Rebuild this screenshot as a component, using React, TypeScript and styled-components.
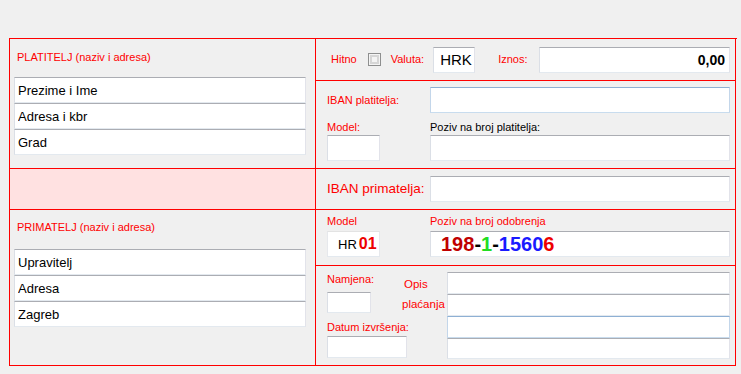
import React from 'react';
import styled, { createGlobalStyle } from 'styled-components';

const RED = '#ff0000';

const GlobalStyle = createGlobalStyle`
  html, body {
    margin: 0;
    padding: 0;
    background: #f0f0f0;
  }
  body {
    font-family: 'Liberation Sans', Arial, sans-serif;
    width: 741px;
    height: 374px;
    overflow: hidden;
  }
`;

const Page = styled.div`
  padding: 38px 0 0 9px;
`;

const Form = styled.div`
  display: grid;
  grid-template-columns: 306px 420px;
  grid-template-rows: 42px 88px 41px 56px 100px;
  width: 727px;
  border-top: 1px solid ${RED};
  border-left: 1px solid ${RED};
`;

const Cell = styled.div`
  box-sizing: border-box;
  min-width: 0;
  border-right: 1px solid ${RED};
  border-bottom: 1px solid ${RED};
`;

const PartyPanel = styled(Cell)<{ $row: string; $top: number; $gap: number }>`
  grid-column: 1;
  grid-row: ${p => p.$row};
  padding: ${p => p.$top}px 9px 0 4px;
  display: flex;
  flex-direction: column;

  & > h3 {
    margin: 0 0 ${p => p.$gap}px 3px;
  }
`;

const PinkStrip = styled(Cell)`
  grid-column: 1;
  grid-row: 3;
  background: #ffe1e1;
`;

const HeaderRow = styled(Cell)`
  grid-column: 2;
  grid-row: 1;
  display: flex;
  align-items: center;
  padding: 0 5px 0 15px;
`;

const PayerRow = styled(Cell)`
  grid-column: 2;
  grid-row: 2;
  padding: 6px 5px 0 10px;
`;

const PayeeIbanRow = styled(Cell)`
  grid-column: 2;
  grid-row: 3;
  display: flex;
  align-items: center;
  padding: 0 5px 0 11px;
`;

const ReferenceRow = styled(Cell)`
  grid-column: 2;
  grid-row: 4;
  padding: 5px 5px 0 10px;
`;

const PurposeRow = styled(Cell)`
  grid-column: 2;
  grid-row: 5;
  display: flex;
  padding: 0 5px 0 11px;
`;

const Heading = styled.h3`
  font-size: 11px;
  line-height: 13px;
  font-weight: normal;
  color: ${RED};
  white-space: nowrap;
`;

const Label = styled.span<{ $black?: boolean; $size?: number }>`
  display: block;
  font-size: ${p => p.$size || 11}px;
  line-height: 13px;
  color: ${p => (p.$black ? '#000000' : RED)};
  white-space: nowrap;
`;

const Field = styled.input<{ $focus?: boolean }>`
  box-sizing: border-box;
  margin: 0;
  padding: 0 0 0 3px;
  height: 26px;
  width: 100%;
  background: #ffffff;
  border: 1px solid;
  border-color: ${p =>
    p.$focus ? '#8eb0d4 #c3d6ea #c8dcee #c3d6ea' : '#abadb3 #e2e3ea #e3e9ef #dbdfe6'};
  font-family: 'Liberation Sans', Arial, sans-serif;
  font-size: 13px;
  color: #000000;
  outline: none;
`;

const AddressField = styled(Field)`
  height: 26px;
`;

const SmallField = styled(Field)<{ $w: number; $h: number }>`
  width: ${p => p.$w}px;
  height: ${p => p.$h}px;
  flex: none;
`;

const CurrencyField = styled(Field)`
  width: 42px;
  flex: none;
  margin-left: 9px;
  padding-left: 6px;
  font-size: 15px;
`;

const AmountField = styled(Field)`
  flex: 1;
  margin-left: 12px;
  padding-right: 4px;
  text-align: right;
  font-weight: bold;
  font-size: 14px;
`;

const CheckBox = styled.span`
  box-sizing: border-box;
  width: 13px;
  height: 13px;
  margin: 0 0 0 11px;
  border: 1px solid #8e8f8f;
  background: #f4f4f4;
  box-shadow: inset 0 0 0 1px #f4f4f4, inset 0 0 0 3px #d6d6d6;
  flex: none;
`;

const Line = styled.div<{ $mt?: number }>`
  display: flex;
  align-items: center;
  margin-top: ${p => p.$mt || 0}px;
`;

const LabelColumn = styled.div`
  width: 104px;
  flex: none;
  padding-left: 1px;
  box-sizing: border-box;
`;

const Grow = styled.div`
  flex: 1;
  min-width: 0;
`;

const CodeBox = styled.div`
  box-sizing: border-box;
  width: 53px;
  height: 26px;
  flex: none;
  display: flex;
  align-items: center;
  padding-left: 10px;
  background: #ffffff;
  border: 1px solid;
  border-color: #e3e3e3 #e6e8ec #e3e9ef #e6e8ec;
`;

const RefBox = styled(CodeBox)`
  width: auto;
  flex: 1;
  padding-left: 10px;
  border-color: #abadb3 #e2e3ea #e3e9ef #dbdfe6;
`;

const Part = styled.span<{ $color: string; $size: number; $bold?: boolean }>`
  color: ${p => p.$color};
  font-size: ${p => p.$size}px;
  font-weight: ${p => (p.$bold ? 'bold' : 'normal')};
  line-height: 1;
`;

const LeftStack = styled.div`
  width: 75px;
  flex: none;
  padding-top: 7px;
  display: flex;
  flex-direction: column;
  align-items: flex-start;
`;

const DescLabel = styled.div`
  width: 45px;
  flex: none;
  padding-top: 8px;
  font-size: 11.5px;
  line-height: 20px;
  color: ${RED};

  & > span {
    display: block;
  }
  & > span:first-child {
    padding-left: 2px;
  }
`;

const RightStack = styled.div`
  flex: 1;
  padding-top: 6px;
  display: flex;
  flex-direction: column;
`;

const DescField = styled(Field)<{ $h: number }>`
  height: ${p => p.$h}px;
`;

export default function App() {
  return (
    <>
      <GlobalStyle />
      <Page>
        <Form>
          <PartyPanel $row="1 / 3" $top={12} $gap={13}>
            <Heading>PLATITELJ (naziv i adresa)</Heading>
            <AddressField defaultValue="Prezime i Ime" readOnly />
            <AddressField defaultValue="Adresa i kbr" readOnly />
            <AddressField defaultValue="Grad" readOnly />
          </PartyPanel>

          <HeaderRow>
            <Label>Hitno</Label>
            <CheckBox />
            <Label style={{ marginLeft: 10 }}>Valuta:</Label>
            <CurrencyField defaultValue="HRK" readOnly />
            <Label style={{ marginLeft: 23 }}>Iznos:</Label>
            <AmountField defaultValue="0,00" readOnly />
          </HeaderRow>

          <PayerRow>
            <Line>
              <LabelColumn>
                <Label>IBAN platitelja:</Label>
              </LabelColumn>
              <Field $focus readOnly />
            </Line>
            <Line $mt={8}>
              <LabelColumn>
                <Label>Model:</Label>
              </LabelColumn>
              <Grow>
                <Label $black>Poziv na broj platitelja:</Label>
              </Grow>
            </Line>
            <Line $mt={1}>
              <LabelColumn>
                <SmallField $w={53} $h={26} readOnly />
              </LabelColumn>
              <Field readOnly />
            </Line>
          </PayerRow>

          <PinkStrip />

          <PayeeIbanRow>
            <LabelColumn style={{ width: 103, paddingLeft: 0 }}>
              <Label $size={13.5} style={{ lineHeight: '16px' }}>IBAN primatelja:</Label>
            </LabelColumn>
            <Field readOnly />
          </PayeeIbanRow>

          <PartyPanel $row="4 / 6" $top={11} $gap={15}>
            <Heading>PRIMATELJ (naziv i adresa)</Heading>
            <AddressField defaultValue="Upravitelj" readOnly />
            <AddressField defaultValue="Adresa" readOnly />
            <AddressField defaultValue="Zagreb" readOnly />
          </PartyPanel>

          <ReferenceRow>
            <Line>
              <LabelColumn>
                <Label>Model</Label>
              </LabelColumn>
              <Grow>
                <Label>Poziv na broj odobrenja</Label>
              </Grow>
            </Line>
            <Line $mt={3}>
              <LabelColumn>
                <CodeBox>
                  <Part $color="#000000" $size={13}>HR</Part>
                  <Part $color="#ee0000" $size={16} $bold style={{ marginLeft: 2 }}>01</Part>
                </CodeBox>
              </LabelColumn>
              <RefBox>
                <Part $color="#c00000" $size={20} $bold>198</Part>
                <Part $color="#000000" $size={20} $bold>-</Part>
                <Part $color="#22dd22" $size={20} $bold>1</Part>
                <Part $color="#000000" $size={20} $bold>-</Part>
                <Part $color="#1a1aff" $size={20} $bold>1560</Part>
                <Part $color="#ee0000" $size={20} $bold>6</Part>
              </RefBox>
            </Line>
          </ReferenceRow>

          <PurposeRow>
            <LeftStack>
              <Label>Namjena:</Label>
              <SmallField $w={44} $h={21} readOnly style={{ marginTop: 6 }} />
              <Label style={{ marginTop: 8 }}>Datum izvršenja:</Label>
              <SmallField $w={80} $h={22} readOnly style={{ marginTop: 2 }} />
            </LeftStack>
            <DescLabel>
              <span>Opis</span>
              <span>plaćanja</span>
            </DescLabel>
            <RightStack>
              <DescField $h={22} readOnly />
              <DescField $h={22} readOnly />
              <DescField $h={22} $focus readOnly />
              <DescField $h={21} readOnly />
            </RightStack>
          </PurposeRow>
        </Form>
      </Page>
    </>
  );
}
